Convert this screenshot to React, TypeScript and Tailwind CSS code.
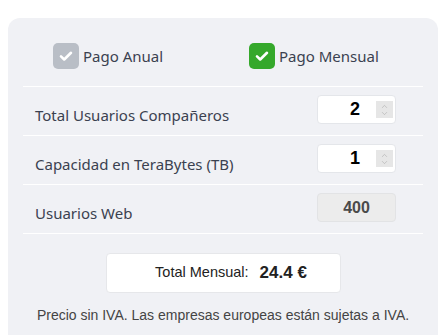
import { ChevronUp, ChevronDown } from "lucide-react";

function Check({ on }: { on: boolean }) {
  return (
    <div
      className={`w-[26px] h-[26px] rounded-[5px] flex items-center justify-center ${
        on ? "bg-[#35a82b]" : "bg-[#b9bec6]"
      }`}
    >
      <svg width="16" height="16" viewBox="0 0 16 16" fill="none">
        <path d="M3 8.4l3.2 3.1L13 4.8" stroke="#fff" strokeWidth="2.6" strokeLinecap="round" strokeLinejoin="round" />
      </svg>
    </div>
  );
}

function NumberBox({ value }: { value: number }) {
  return (
    <div className="w-[79px] h-[29px] bg-white rounded-[4px] border border-[#e4e6ea] flex items-center justify-end pr-[2px]">
      <span className="font-['Liberation_Sans',sans-serif] font-bold text-[18px] text-black mr-[16px]">{value}</span>
      <div className="w-[17px] h-[17px] bg-[#e6e6e6] flex flex-col items-center justify-center text-[#a0a0a0]">
        <ChevronUp size={9} strokeWidth={1.3} className="-mb-[1px]" />
        <ChevronDown size={9} strokeWidth={1.3} className="-mt-[1px]" />
      </div>
    </div>
  );
}

export default function App() {
  const rows = [
    { label: "Total Usuarios Compañeros", value: 2 },
    { label: "Capacidad en TeraBytes (TB)", value: 1 },
  ];

  return (
    <div className="w-[444px] h-[335px] bg-white pt-[18px] pl-[8px] overflow-hidden">
      <div className="w-[430px] h-[340px] bg-[#f0f1f5] rounded-[12px] px-[15px] font-['Noto_Sans',sans-serif] text-[#3b4150]">
        {/* Payment toggles */}
        <div className="grid grid-cols-2 h-[69px] border-b border-white items-end pb-[17px]">
          <div className="flex items-center gap-[4px] pl-[30px]">
            <Check on={false} />
            <span className="text-[15px]">Pago Anual</span>
          </div>
          <div className="flex items-center gap-[4px] pl-[26px]">
            <Check on={true} />
            <span className="text-[15px]">Pago Mensual</span>
          </div>
        </div>

        {rows.map((r) => (
          <div key={r.label} className="h-[49px] border-b border-white flex items-start justify-between pl-[12px] pr-[27px] pt-[8px]">
            <span className="text-[15px] mt-[9px]">{r.label}</span>
            <NumberBox value={r.value} />
          </div>
        ))}

        <div className="h-[49px] border-b border-white flex items-start justify-between pl-[12px] pr-[27px] pt-[8px]">
          <span className="text-[15px] mt-[9px]">Usuarios Web</span>
          <div className="w-[79px] h-[29px] bg-[#ececec] rounded-[4px] border border-[#e2e3e5] flex items-center justify-center font-['Liberation_Sans',sans-serif] font-bold text-[16px] text-[#4a4a4a]">
            400
          </div>
        </div>

        {/* Total */}
        <div className="flex justify-center mt-[19px]">
          <div className="w-[235px] h-[40px] bg-white rounded-[4px] border border-[#e6e7ea] flex items-center justify-center gap-[11px] pl-[16px] font-['Liberation_Sans',sans-serif] text-[#222]">
            <span className="text-[14.5px]">Total Mensual:</span>
            <span className="text-[17px] font-bold">24.4 €</span>
          </div>
        </div>

        <p className="mt-[12px] text-center font-['Liberation_Sans',sans-serif] text-[14px] text-[#444]">
          Precio sin IVA. Las empresas europeas están sujetas a IVA.
        </p>
      </div>
    </div>
  );
}
